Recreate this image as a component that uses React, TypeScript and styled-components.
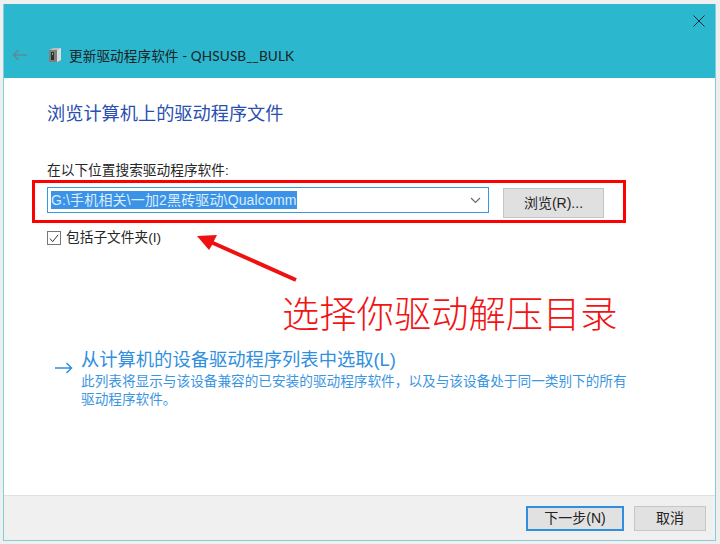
import React from "react";
import styled, { createGlobalStyle } from "styled-components";

const Global = createGlobalStyle`
  html, body { margin: 0; padding: 0; background: #f3f3f3; }
  body { font-family: "Noto Sans CJK SC", "Liberation Sans", sans-serif; }
`;
const cjk = `"Liberation Sans", "Noto Sans CJK SC", sans-serif`;
const lato = `"Lato", "Noto Sans CJK SC", sans-serif`;

const Page = styled.div`
  width: 720px; height: 544px; box-sizing: border-box;
  padding: 4px 4px 3px 3px; background: #efefef; position: relative; overflow: hidden;
`;
const Win = styled.div`
  width: 100%; height: 100%; box-sizing: border-box; display: flex; flex-direction: column;
  background: #fff; border: 1px solid #7fcfdc; border-top: 0;
`;
const TitleBar = styled.div`
  height: 74px; flex: none; background: #2bb7cd; display: flex; flex-direction: column;
  box-sizing: border-box; padding: 0 0 0 7px;
`;
const CloseRow = styled.div`
  height: 35px; display: flex; justify-content: flex-end; align-items: flex-start;
  padding: 11px 10px 0 0; box-sizing: border-box; flex: none;
`;
const NavRow = styled.div`display: flex; align-items: center; height: 32px;`;
const TitleText = styled.span`
  font: 13.6px ${lato}; color: #1c2326; margin-left: 7px; white-space: nowrap; letter-spacing: 0.1px;
`;
const Body = styled.div`
  flex: 1; display: flex; flex-direction: column; padding: 24px 0 0 43px; box-sizing: border-box; min-height: 0;
`;
const Heading = styled.div`font: 18.2px/24px ${cjk}; color: #2a4fb0; height: 24px;`;
const Label = styled.div`font: 13.7px/18px ${cjk}; color: #262626; margin-top: 36px;`;
const PathRow = styled.div`display: flex; align-items: flex-start; margin-top: 7px;`;
const Combo = styled.div`
  width: 442px; height: 26px; box-sizing: border-box; border: 1px solid #3d96dc; background: #fff;
  display: flex; align-items: center; justify-content: space-between; padding: 0 7px 0 3px;
`;
const Selected = styled.span`
  font: 14px/18px ${cjk}; color: #dcecfb; background: #3b93e8; white-space: nowrap; height: 18px;
  display: block; letter-spacing: 0.15px;
`;
const Browse = styled.div`
  margin-left: 14px; width: 101px; height: 30px; box-sizing: border-box; margin-top: 1px;
  border: 1px solid #c4c4c4; background: #e0e0e0; font: 14px/28px ${cjk}; color: #262626; text-align: center;
`;
const CheckRow = styled.div`display: flex; align-items: center; margin-top: 11px; height: 18px;`;
const CheckBox = styled.div`
  width: 14px; height: 14px; box-sizing: border-box; border: 1px solid #777; background: #fff;
  display: flex; align-items: center; justify-content: center;
`;
const CheckLabel = styled.span`font: 13.7px/18px ${cjk}; color: #262626; margin-left: 5px;`;
const LinkBlock = styled.div`display: flex; margin-top: 101px; align-items: flex-start;`;
const ArrowSlot = styled.div`width: 34px; flex: none; padding: 7px 0 0 8px; box-sizing: border-box;`;
const LinkText = styled.div`display: flex; flex-direction: column;`;
const LinkTitle = styled.div`font: 18.3px/24px ${cjk}; color: #2f8fe0; white-space: nowrap;`;
const LinkDesc = styled.div`font: 13.65px/18px ${cjk}; color: #3b96e2; width: 552px; margin-top: 1px;`;
const Footer = styled.div`
  height: 45px; flex: none; background: #f0f0f0; border-top: 1px solid #dfdfdf; box-sizing: border-box;
  display: flex; justify-content: flex-end; align-items: center; gap: 10px; padding: 1px 9px 0 0;
`;
const NextBtn = styled.div`
  width: 98px; height: 25px; box-sizing: border-box; border: 2px solid #2f8fdc; background: #e1e1e1;
  font: 14px/21px ${cjk}; color: #222; text-align: center;
`;
const CancelBtn = styled.div`
  width: 72px; height: 25px; box-sizing: border-box; border: 1px solid #c6c6c6; background: #e1e1e1;
  font: 14px/23px ${cjk}; color: #222; text-align: center;
`;
const RedBox = styled.div`
  position: absolute; left: 32px; top: 180px; width: 594px; height: 43px; box-sizing: border-box;
  border: 3px solid #f00; pointer-events: none;
`;
const RedArrow = styled.svg`position: absolute; left: 192px; top: 228px;`;
const Note = styled.div`
  position: absolute; left: 282px; top: 288px; font-family: "Noto Sans CJK SC", sans-serif; font-size: 37.3px;
  line-height: 48px; font-weight: 300; color: #f01414; white-space: nowrap;
`;

export default function App() {
  return (
    <Page>
      <Global />
      <Win>
        <TitleBar>
          <CloseRow>
            <svg width="12" height="12" viewBox="0 0 12 12">
              <path d="M.5.5l11 11M11.5.5l-11 11" stroke="#12323c" strokeWidth="1" fill="none" />
            </svg>
          </CloseRow>
          <NavRow>
            <svg width="15" height="12" viewBox="0 0 15 12" style={{ marginLeft: 1 }}>
              <path d="M15 6H1.5M6.5 1l-5 5 5 5" stroke="#5f8a98" strokeWidth="1.5" fill="none" />
            </svg>
            <svg width="14" height="16" viewBox="0 0 14 16" style={{ marginLeft: 21 }}>
              <path d="M1 3l4-2h8v12l-4 2H1z" fill="#b9bcbc" />
              <path d="M1 3h8v12H1z" fill="#7b7f7f" />
              <path d="M9 3l4-2v12l-4 2z" fill="#dcdede" />
              <path d="M3 5h3v8H3z" fill="#2c3030" />
              <path d="M4 6h1v2H4z" fill="#5fd35f" />
            </svg>
            <TitleText>更新驱动程序软件 - QHSUSB__BULK</TitleText>
          </NavRow>
        </TitleBar>
        <Body>
          <Heading>浏览计算机上的驱动程序文件</Heading>
          <Label>在以下位置搜索驱动程序软件:</Label>
          <PathRow>
            <Combo>
              <Selected>G:\手机相关\一加2黑砖驱动\Qualcomm</Selected>
              <svg width="11" height="7" viewBox="0 0 11 7">
                <path d="M1 1l4.5 4.5L10 1" stroke="#666" strokeWidth="1.1" fill="none" />
              </svg>
            </Combo>
            <Browse>浏览(R)...</Browse>
          </PathRow>
          <CheckRow>
            <CheckBox>
              <svg width="10" height="9" viewBox="0 0 11 10">
                <path d="M1 5l3 3.5L10 1" stroke="#333" strokeWidth="1.1" fill="none" />
              </svg>
            </CheckBox>
            <CheckLabel>包括子文件夹(I)</CheckLabel>
          </CheckRow>
          <LinkBlock>
            <ArrowSlot>
              <svg width="18" height="12" viewBox="0 0 18 12">
                <path d="M0 6h16.5M11.5 1l5 5-5 5" stroke="#2f8fe0" strokeWidth="1.5" fill="none" />
              </svg>
            </ArrowSlot>
            <LinkText>
              <LinkTitle>从计算机的设备驱动程序列表中选取(L)</LinkTitle>
              <LinkDesc>此列表将显示与该设备兼容的已安装的驱动程序软件，以及与该设备处于同一类别下的所有驱动程序软件。</LinkDesc>
            </LinkText>
          </LinkBlock>
        </Body>
        <Footer>
          <NextBtn>下一步(N)</NextBtn>
          <CancelBtn>取消</CancelBtn>
        </Footer>
      </Win>
      <RedBox />
      <RedArrow width="110" height="56" viewBox="0 0 110 56">
        <polygon points="5,8 25,7 21.8,13.2 104.8,50.2 103.2,53.8 20.2,16.8 17,22" fill="#ee1111" />
      </RedArrow>
      <Note>选择你驱动解压目录</Note>
    </Page>
  );
}
